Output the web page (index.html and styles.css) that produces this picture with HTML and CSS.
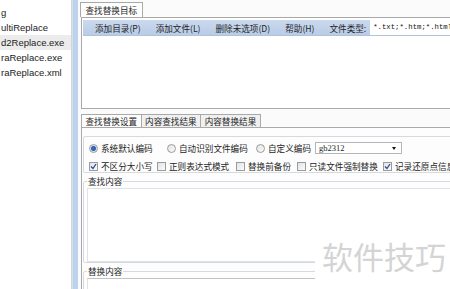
FILE: index.html
```html
<!DOCTYPE html>
<html>
<head>
	<title>批量文本替换</title>
	<link rel="stylesheet" href="styles.css">
</head>
<body>
	<div class="side">
		<div class="file">g</div>
		<div class="file">ultiReplace</div>
		<div class="file selected">d2Replace.exe</div>
		<div class="file">raReplace.exe</div>
		<div class="file">raReplace.xml</div>
	</div>
	<div class="splitter"></div>

	<div class="main">
		<div class="tabs top-tabs">
			<span class="tab active">查找替换目标</span>
		</div>
		<div class="panel target">
			<div class="toolbar">
				<span class="tool">添加目录(P)</span>
				<span class="tool">添加文件(L)</span>
				<span class="tool">删除未选项(D)</span>
				<span class="tool">帮助(H)</span>
				<span class="tool">文件类型:</span>
				<span class="pattern">*.txt;*.htm;*.html</span>
			</div>
			<div class="file-list"></div>
		</div>

		<div class="tabs bottom-tabs">
			<span class="tab active">查找替换设置</span>
			<span class="tab">内容查找结果</span>
			<span class="tab">内容替换结果</span>
		</div>
		<div class="panel settings">
			<div class="options">
				<div class="row">
					<span class="opt enc-sys"><span class="mark radio on"></span>系统默认编码</span>
					<span class="opt enc-auto"><span class="mark radio"></span>自动识别文件编码</span>
					<span class="opt enc-custom"><span class="mark radio"></span>自定义编码</span>
					<span class="select">gb2312<span class="arrow"></span></span>
				</div>
				<div class="row">
					<span class="opt chk-case"><span class="mark check on"><svg width="7" height="7" viewBox="0 0 7 7"><path d="M1 3.5 L3 5.5 L6 1" fill="none" stroke="#2d4f93" stroke-width="1.3"/></svg></span>不区分大小写</span>
					<span class="opt chk-regex"><span class="mark check"></span>正则表达式模式</span>
					<span class="opt chk-backup"><span class="mark check"></span>替换前备份</span>
					<span class="opt chk-readonly"><span class="mark check"></span>只读文件强制替换</span>
					<span class="opt"><span class="mark check on"><svg width="7" height="7" viewBox="0 0 7 7"><path d="M1 3.5 L3 5.5 L6 1" fill="none" stroke="#2d4f93" stroke-width="1.3"/></svg></span>记录还原点信息</span>
				</div>
			</div>

			<fieldset class="group">
				<legend>查找内容</legend>
				<div class="textbox"></div>
			</fieldset>
			<fieldset class="group">
				<legend>替换内容</legend>
				<div class="textbox replace"></div>
			</fieldset>
		</div>
	</div>

	<div class="watermark">软件技巧</div>
</body>
</html>
```

FILE: styles.css
```css
* {
    box-sizing: border-box;
}

body {
    margin: 0;
    width: 450px;
    height: 289px;
    overflow: hidden;
    position: relative;
    display: flex;
    background-color: #fff;
    font-family: "Noto Sans CJK SC", sans-serif;
    font-size: 8.6px;
    color: #1e1e1e;
}

/* file tree on the left */
.side {
    flex: none;
    width: 72px;
    padding-top: 5px;
    border-right: 1px solid #d4d4d4;
    font-family: "Liberation Sans", Arial, sans-serif;
    font-size: 9.5px;
    color: #222;
}

.file {
    height: 15px;
    line-height: 15px;
    padding-left: 1px;
    white-space: nowrap;
}

.file.selected {
    background-color: #ececec;
}

.splitter {
    flex: none;
    width: 6px;
    background-color: #bdd3ec;
    border-left: 1px solid #d3e2f3;
}

.main {
    flex: none;
    width: 400px;
    padding-left: 3px;
    background-color: #fbfbfb;
}

/* tabs */
.tabs {
    display: flex;
}

.tab {
    border: 1px solid #a9a9a9;
    border-bottom: none;
    background-color: #f0f0f0;
    white-space: nowrap;
}

.top-tabs {
    padding-top: 2px;
}

.top-tabs .tab {
    margin-left: -1px;
    padding: 0 4.5px;
    line-height: 14px;
    background-color: #fff;
}

.bottom-tabs {
    margin-top: 5px;
}

.bottom-tabs .tab {
    margin-left: -1px;
    padding: 0 3.5px;
    line-height: 12px;
}

.bottom-tabs .tab:first-child {
    margin-left: 0;
}

.bottom-tabs .tab.active {
    background-color: #fdfdfd;
}

.panel {
    border: 1px solid #a9a9a9;
}

.target {
    height: 92px;
    padding: 2px 1px 0;
    background-color: #fff;
}

.toolbar {
    display: flex;
    align-items: center;
    gap: 15px;
    height: 16px;
    padding-left: 12px;
    background: linear-gradient(#cad9ee, #b9cce6);
    border-bottom: 1px solid #aec2dc;
    white-space: nowrap;
}

.tool {
    line-height: 16px;
}

.pattern {
    margin-left: -11px;
    height: 15px;
    padding-left: 3px;
    flex: 1;
    background-color: #fff;
    font-family: "Liberation Mono", monospace;
    font-size: 7.3px;
    line-height: 15px;
    color: #111;
}

.settings {
    height: 200px;
    padding: 8px 1px 0;
    background-color: #fdfdfd;
}

/* encoding and switches */
.options {
    display: flex;
    flex-direction: column;
    gap: 6px;
    height: 37px;
    padding: 5px 0 0 5px;
    border: 1px solid #d6dade;
    border-radius: 2px;
}

.row {
    display: flex;
    align-items: center;
    height: 12px;
}

.opt {
    display: flex;
    align-items: center;
    flex: none;
    white-space: nowrap;
}

.enc-sys { width: 78px; }
.enc-auto { width: 89px; }
.enc-custom { width: 59px; }
.chk-case { width: 68px; }
.chk-regex { width: 79px; }
.chk-backup { width: 61px; }
.chk-readonly { width: 86px; }

.mark {
    flex: none;
    width: 9px;
    height: 9px;
    margin-right: 3px;
    border: 1px solid #9a9b9c;
    background: linear-gradient(135deg, #e2e3e5, #fbfbfb);
    display: flex;
    align-items: center;
    justify-content: center;
}

.radio {
    border-radius: 50%;
}

.radio.on {
    background: radial-gradient(circle, #3a74c0 0, #2a5ea8 2px, #d9e3ef 3px, #f4f4f4 4px);
}

.select {
    display: flex;
    justify-content: space-between;
    align-items: center;
    width: 87px;
    height: 12px;
    padding: 0 5px 0 3px;
    border: 1px solid #b3b5ba;
    background-color: #fff;
    font-family: "Liberation Serif", serif;
    font-size: 8.5px;
}

.arrow {
    width: 0;
    height: 0;
    border-left: 2.5px solid transparent;
    border-right: 2.5px solid transparent;
    border-top: 3px solid #111;
}

/* find / replace boxes */
.group {
    margin: 2px 0 0;
    padding: 1px 0 0 3px;
    border: 1px solid #d6dade;
    border-radius: 2px;
    min-width: 0;
}

.group legend {
    padding: 0 1px;
    line-height: 12px;
}

.textbox {
    height: 74px;
    border: 1px solid #dfe3e8;
    background-color: #fff;
}

.textbox.replace {
    border-top-color: #c2c2c2;
}

.watermark {
    position: absolute;
    left: 315px;
    top: 234px;
    width: 135px;
    height: 55px;
    padding: 6px 0 0 7px;
    background-color: #fff;
    font-size: 31px;
    line-height: 31px;
    color: #d4d4d4;
    white-space: nowrap;
}
```
